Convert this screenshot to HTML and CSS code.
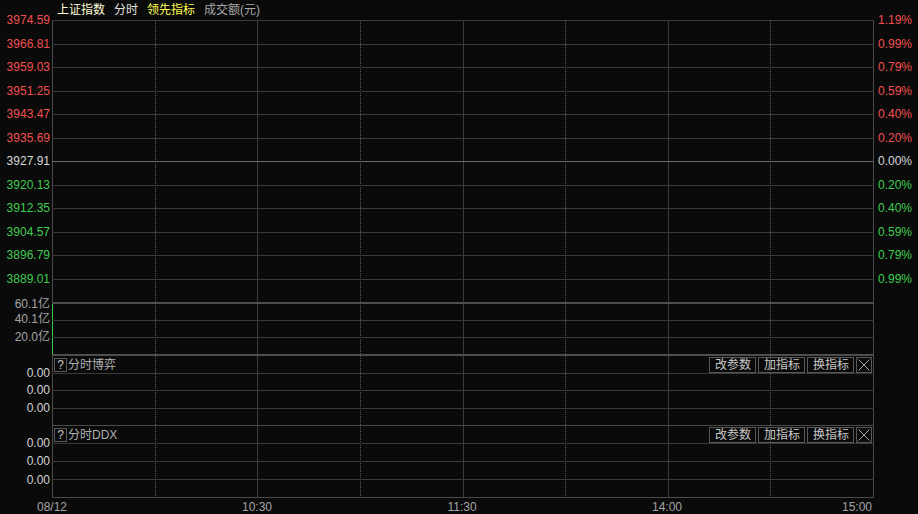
FILE: index.html
```html
<!DOCTYPE html>
<html lang="zh-CN">
<head>
<meta charset="utf-8">
<title>上证指数 分时</title>
<link rel="stylesheet" href="styles.css">
</head>
<body>
<div class="app">
  <div class="titlebar">
    <span class="t-name">上证指数</span><span class="t-mode">分时</span><span class="t-ind">领先指标</span><span class="t-vol">成交额(元)</span>
  </div>

  <div class="panel main">
    <div class="yl">
      <div class="lab up"><span>3974.59</span></div>
      <div class="lab up"><span>3966.81</span></div>
      <div class="lab up"><span>3959.03</span></div>
      <div class="lab up"><span>3951.25</span></div>
      <div class="lab up"><span>3943.47</span></div>
      <div class="lab up"><span>3935.69</span></div>
      <div class="lab flat"><span>3927.91</span></div>
      <div class="lab down"><span>3920.13</span></div>
      <div class="lab down"><span>3912.35</span></div>
      <div class="lab down"><span>3904.57</span></div>
      <div class="lab down"><span>3896.79</span></div>
      <div class="lab down"><span>3889.01</span></div>
    </div>
    <div class="plot">
      <div class="cols"><i></i><i></i><i></i><i></i><i></i><i></i><i></i><i></i></div>
      <div class="rows">
        <div class="r"></div><div class="r"></div><div class="r"></div><div class="r"></div>
        <div class="r"></div><div class="r"></div><div class="r zero"></div><div class="r"></div>
        <div class="r"></div><div class="r"></div><div class="r"></div><div class="r"></div>
      </div>
    </div>
    <div class="yr">
      <div class="lab up"><span>1.19%</span></div>
      <div class="lab up"><span>0.99%</span></div>
      <div class="lab up"><span>0.79%</span></div>
      <div class="lab up"><span>0.59%</span></div>
      <div class="lab up"><span>0.40%</span></div>
      <div class="lab up"><span>0.20%</span></div>
      <div class="lab flat"><span>0.00%</span></div>
      <div class="lab down"><span>0.20%</span></div>
      <div class="lab down"><span>0.40%</span></div>
      <div class="lab down"><span>0.59%</span></div>
      <div class="lab down"><span>0.79%</span></div>
      <div class="lab down"><span>0.99%</span></div>
    </div>
  </div>

  <div class="panel vol">
    <div class="yl grey">
      <div class="lab first"><span>60.1亿</span></div>
      <div class="lab"><span>40.1亿</span></div>
      <div class="lab"><span>20.0亿</span></div>
    </div>
    <div class="plot">
      <div class="cols bar"><i></i><i></i><i></i><i></i><i></i><i></i><i></i><i></i></div>
      <div class="rows">
        <div class="r sep"></div><div class="r"></div><div class="r"></div>
      </div>
    </div>
    <div class="yr"></div>
  </div>

  <div class="panel sub sub1">
    <div class="yl light">
      <div class="hsp"></div>
      <div class="lab"><span>0.00</span></div>
      <div class="lab"><span>0.00</span></div>
      <div class="lab"><span>0.00</span></div>
    </div>
    <div class="plot">
      <div class="cols"><i></i><i></i><i></i><i></i><i></i><i></i><i></i><i></i></div>
      <div class="rows">
        <div class="hd sep">
          <span class="help">?</span><span class="title">分时博弈</span>
          <span class="btn first">改参数</span><span class="btn">加指标</span><span class="btn">换指标</span>
          <span class="btn close"><svg width="12" height="12" viewBox="0 0 12 12"><path d="M0.5 0.5L11.5 11.5M11.5 0.5L0.5 11.5" stroke="#a8a8a8" stroke-width="1" fill="none"/></svg></span>
        </div>
        <div class="r"></div><div class="r"></div><div class="r"></div>
      </div>
    </div>
    <div class="yr"></div>
  </div>

  <div class="panel sub sub2">
    <div class="yl light">
      <div class="hsp"></div>
      <div class="lab"><span>0.00</span></div>
      <div class="lab"><span>0.00</span></div>
      <div class="lab"><span>0.00</span></div>
    </div>
    <div class="plot">
      <div class="cols"><i></i><i></i><i></i><i></i><i></i><i></i><i></i><i></i></div>
      <div class="rows">
        <div class="hd">
          <span class="help">?</span><span class="title">分时DDX</span>
          <span class="btn first">改参数</span><span class="btn">加指标</span><span class="btn">换指标</span>
          <span class="btn close"><svg width="12" height="12" viewBox="0 0 12 12"><path d="M0.5 0.5L11.5 11.5M11.5 0.5L0.5 11.5" stroke="#a8a8a8" stroke-width="1" fill="none"/></svg></span>
        </div>
        <div class="r"></div><div class="r"></div><div class="r last"></div>
      </div>
    </div>
    <div class="yr"></div>
  </div>

  <div class="xaxis">
    <span class="tk">08/12</span><span class="sp"></span>
    <span class="tk">10:30</span><span class="sp"></span>
    <span class="tk">11:30</span><span class="sp"></span>
    <span class="tk">14:00</span><span class="sp"></span>
    <span class="tk end">15:00</span>
  </div>
</div>
</body>
</html>
```

FILE: styles.css
```css
* { box-sizing: border-box; }

body {
  margin: 0;
  background: #0a0a0a;
  font-family: "Liberation Sans", "Noto Sans CJK SC", sans-serif;
  font-size: 12px;
  color: #cccccc;
}

.app {
  width: 918px;
  height: 514px;
  overflow: hidden;
}

/* title bar */
.titlebar {
  height: 20px;
  display: flex;
  align-items: center;
  gap: 9px;
  padding-left: 57px;
  line-height: 14px;
}
.t-name { color: #ffffd8; }
.t-mode { color: #e0e0e0; }
.t-ind { color: #ffff50; }
.t-vol { color: #a8a8a8; }

/* panels */
.panel {
  display: grid;
  grid-template-columns: 52px 822px 1fr;
}
.main { height: 282px; }
.vol { height: 52px; }
.sub1 { height: 71px; }
.sub2 { height: 73px; }

.yl {
  display: flex;
  flex-direction: column;
  text-align: right;
  padding-right: 2px;
}
.yr {
  display: flex;
  flex-direction: column;
  padding-left: 4px;
}
.lab {
  flex: 1;
  min-height: 0;
  white-space: nowrap;
}
.lab span {
  display: block;
  margin-top: -7px;
  line-height: 14px;
}
.vol .lab.first span { margin-top: -5px; }

.up { color: #f05050; }
.down { color: #40cc50; }
.flat { color: #d8d8d8; }
.grey { color: #a4a4a4; }
.light { color: #d4d4d4; }

.sub1 .hsp { height: 19px; flex: none; }
.sub2 .hsp { height: 18px; flex: none; }

/* plot area: vertical grid layer + horizontal rows layer stacked */
.plot {
  display: grid;
  grid-template: 1fr / 1fr;
}
.plot > * { grid-area: 1 / 1; }

.cols {
  display: flex;
  border-left: 1px solid #4a4a4a;
  border-right: 1px solid #4a4a4a;
}
.cols.bar { border-left-color: #3ccc4a; }
.cols i {
  flex: 1;
  border-right: 1px solid #3a3a3a;
}
.cols i:nth-child(odd) {
  border-right-style: dotted;
  border-right-color: #5a5a5a;
}
.cols i:last-child { border-right: 0; }

.rows {
  display: flex;
  flex-direction: column;
}
.r {
  flex: 1;
  border-top: 1px solid #3a3a3a;
}
.r.zero { border-top-color: #6a6a6a; }
.r.sep { border-top: 2px solid #4e4e4e; }
.r.last { border-bottom: 1px solid #4a4a4a; }

/* indicator panel header */
.hd {
  display: flex;
  align-items: center;
  padding: 0 2px 0 2px;
  border-top: 1px solid #4a4a4a;
  height: 18px;
  flex: none;
}
.hd.sep {
  height: 19px;
  border-top: 2px solid #4e4e4e;
}
.help {
  width: 13px;
  height: 14px;
  border: 1px solid #5a5a5a;
  color: #c8c8c8;
  line-height: 12px;
  text-align: center;
  font-size: 12px;
}
.title {
  margin-left: 1px;
  color: #b0b0b0;
  line-height: 14px;
}
.btn {
  height: 16px;
  border: 1px solid #585858;
  color: #c8c8c8;
  line-height: 14px;
  padding: 0 4px 0 5px;
  margin-left: 2px;
  display: flex;
  align-items: center;
}
.btn.first { margin-left: auto; }
.btn.close {
  width: 16px;
  padding: 0;
  justify-content: center;
}

/* time axis */
.xaxis {
  display: flex;
  margin-left: 52px;
  width: 822px;
  height: 16px;
  line-height: 16px;
  padding-top: 1px;
  color: #a4a4a4;
}
.tk {
  width: 0;
  display: flex;
  justify-content: center;
  white-space: nowrap;
}
.tk.end { justify-content: flex-end; padding-right: 2px; }
.sp { flex: 1; }
```
